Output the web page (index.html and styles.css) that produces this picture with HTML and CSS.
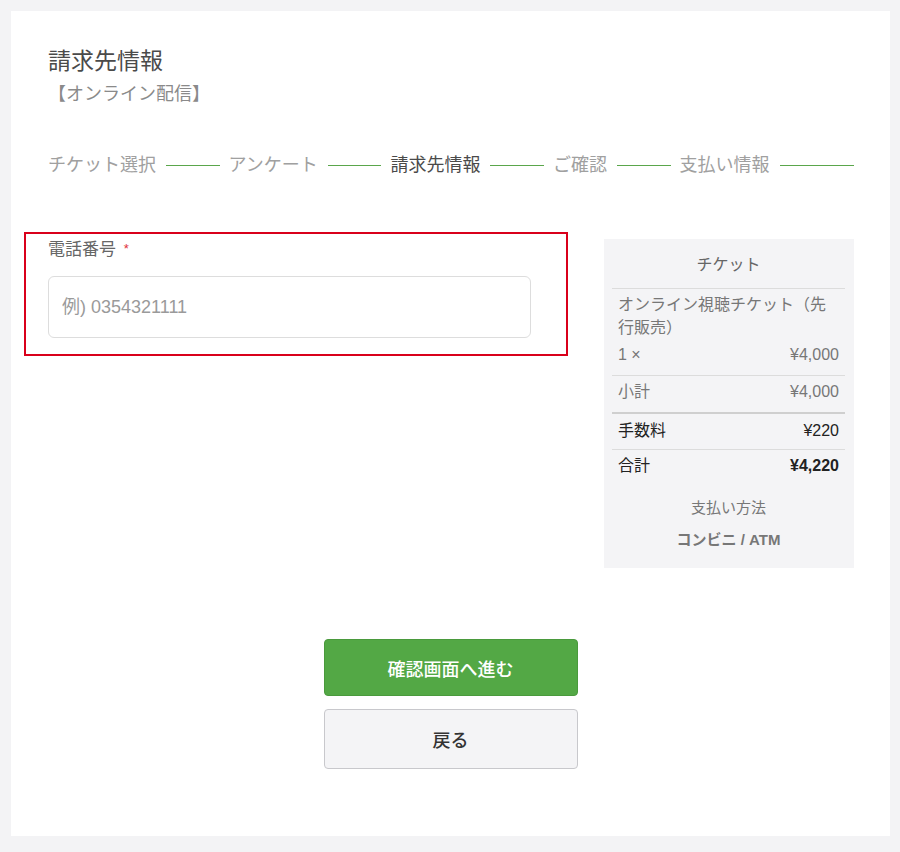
FILE: index.html
```html
<!DOCTYPE html>
<html lang="ja">
<head>
<meta charset="utf-8">
<title>請求先情報</title>
<link rel="stylesheet" href="styles.css">
</head>
<body>
<div class="page">
  <div class="card">
    <header class="head">
      <h1 class="title">請求先情報</h1>
      <p class="subtitle">【オンライン配信】</p>
    </header>
    <nav class="steps">
      <span class="step">チケット選択</span><span class="line"></span>
      <span class="step">アンケート</span><span class="line"></span>
      <span class="step active">請求先情報</span><span class="line"></span>
      <span class="step">ご確認</span><span class="line"></span>
      <span class="step">支払い情報</span><span class="line last"></span>
    </nav>
    <div class="main">
      <section class="form-box">
        <label class="label" for="tel">電話番号 <span class="req">*</span></label>
        <input class="input" id="tel" type="text" placeholder="例) 0354321111">
      </section>
      <aside class="summary">
        <div class="sum-head">チケット</div>
        <div class="sum-item">
          <div class="item-name">オンライン視聴チケット（先行販売）</div>
          <div class="row qty"><span>1 ×</span><span>¥4,000</span></div>
        </div>
        <div class="row subtotal"><span>小計</span><span>¥4,000</span></div>
        <div class="row fee"><span>手数料</span><span>¥220</span></div>
        <div class="row total"><span>合計</span><span class="total-val">¥4,220</span></div>
        <div class="pay-label">支払い方法</div>
        <div class="pay-method">コンビニ / ATM</div>
      </aside>
    </div>
    <div class="actions">
      <button class="btn primary" type="button">確認画面へ進む</button>
      <button class="btn secondary" type="button">戻る</button>
    </div>
  </div>
</div>
</body>
</html>
```
FILE: styles.css
```css
* { box-sizing: border-box; }
html, body { margin: 0; padding: 0; }
body {
  background: #f3f3f5;
  font-family: "Liberation Sans", "Noto Sans CJK JP", sans-serif;
  color: #555;
}
.page {
  padding: 11px 10px 16px 11px;
}
.card {
  background: #fff;
  width: 879px;
  height: 825px;
  padding: 35px 36px 0 37px;
}
.title {
  margin: 0;
  font-size: 23px;
  line-height: 30px;
  font-weight: 400;
  color: #4a4a4a;
}
.subtitle {
  margin: 6px 0 0 0;
  font-size: 18px;
  line-height: 24px;
  color: #8a8a8a;
}
.steps {
  margin-top: 47px;
  display: flex;
  align-items: center;
  height: 24px;
}
.step {
  font-size: 18px;
  line-height: 24px;
  color: #a0a0a0;
  white-space: nowrap;
}
.step.active { color: #4a4a4a; }
.line {
  display: block;
  width: 54px;
  height: 1px;
  background: #5aa64b;
  margin: 0 9px 0 10px;
}
.line.last { width: 75px; margin-right: 0; }
.main {
  margin-top: 55px;
  display: flex;
  align-items: flex-start;
  margin-left: -24px;
}
.form-box {
  width: 544px;
  border: 2px solid #d9001b;
  padding: 4px 36px 16px 22px;
}
.label {
  display: block;
  font-size: 17px;
  line-height: 22px;
  font-weight: 400;
  color: #666;
}
.req { color: #e0303a; font-weight: 400; font-size: 13px; margin-left: 3px; vertical-align: 2px; }
.input {
  display: block;
  margin-top: 15px;
  width: 483px;
  height: 62px;
  border: 1px solid #ddd;
  border-radius: 6px;
  padding: 0 13px;
  font-family: "Liberation Sans", "Noto Sans CJK JP", sans-serif;
  font-size: 18px;
  color: #333;
  outline: none;
  background: #fff;
}
.input::placeholder { color: #9a9a9a; }
.summary {
  margin-left: 36px;
  margin-top: 7px;
  width: 251px;
  height: 329px;
  background: #f4f4f6;
  padding: 0 9px 0 8px;
  font-size: 16px;
  color: #777;
}
.sum-head {
  text-align: center;
  line-height: 22px;
  padding: 15px 0 12px;
  border-bottom: 1px solid #dcdcdc;
  color: #666;
}
.sum-item {
  padding: 4px 6px 9px;
  border-bottom: 1px solid #dcdcdc;
}
.item-name { line-height: 23px; }
.row {
  display: flex;
  justify-content: space-between;
  line-height: 22px;
}
.qty { margin-top: 5px; }
.subtotal {
  padding: 5px 6px 9px;
  border-bottom: 2px solid #cfcfcf;
}
.fee {
  padding: 6px 6px 7px;
  border-bottom: 1px solid #dcdcdc;
  color: #222;
}
.total {
  padding: 5px 6px 0;
  color: #222;
}
.total-val { font-weight: 700; }
.pay-label {
  margin-top: 20px;
  text-align: center;
  line-height: 22px;
  color: #777;
  font-size: 15px;
}
.pay-method {
  margin-top: 10px;
  text-align: center;
  line-height: 22px;
  font-weight: 700;
  color: #777;
  font-size: 15px;
}
.actions {
  margin-top: 71px;
  display: flex;
  flex-direction: column;
  align-items: center;
  gap: 13px;
  padding-right: 1px;
}
.btn {
  width: 254px;
  font-family: "Liberation Sans", "Noto Sans CJK JP", sans-serif;
  font-size: 18px;
  font-weight: 500;
  border-radius: 4px;
  cursor: pointer;
}
.primary {
  height: 57px;
  background: #53a845;
  color: #fff;
  border: 1px solid #4a9a3d;
}
.secondary {
  height: 60px;
  background: #f4f4f6;
  color: #333;
  border: 1px solid #c8c8cc;
}
```
